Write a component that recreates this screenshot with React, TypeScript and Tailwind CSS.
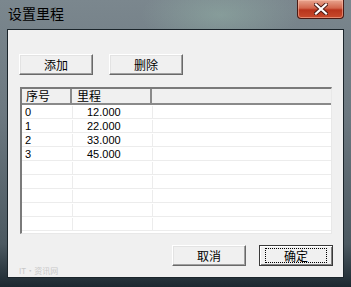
import React from "react";

const rows = [
  { id: "0", km: "12.000" },
  { id: "1", km: "22.000" },
  { id: "2", km: "33.000" },
  { id: "3", km: "45.000" },
];

function WinButton({ label, primary }: { label: string; primary?: boolean }) {
  return (
    <button
      className={`flex h-[21px] w-[74px] items-center justify-center bg-[#f0f0f0] text-[12px] text-black ${
        primary
          ? "border border-[#3a3a3a] shadow-[inset_1px_1px_0_#fff,inset_-1px_-1px_0_#808080]"
          : "border-t border-l border-[#fff] border-r border-b border-r-[#696969] border-b-[#696969] shadow-[inset_-1px_-1px_0_#a0a0a0,inset_1px_1px_0_#e3e3e3]"
      }`}
      style={{ fontFamily: '"Noto Sans CJK SC", sans-serif' }}
    >
      {primary ? (
        <span className="flex h-[15px] w-[62px] items-center justify-center border border-dotted border-black">
          {label}
        </span>
      ) : (
        label
      )}
    </button>
  );
}

export default function App() {
  return (
    <div
      className="relative flex h-[287px] w-[351px] flex-col overflow-hidden bg-[linear-gradient(180deg,#7b878e_0%,#6c7880_40%,#4c5961_85%,#1c2830_100%)]"
      style={{ fontFamily: '"Noto Sans CJK SC", sans-serif' }}
    >
      <div className="pointer-events-none absolute left-[140px] top-[-20px] h-[70px] w-[160px] rounded-full bg-[radial-gradient(ellipse,rgba(160,200,180,0.35),transparent_70%)]" />
      {/* title bar */}
      <div className="relative flex h-[29px] items-start justify-between pl-[8px]">
        <span className="mt-[3px] text-[14px] font-normal leading-[20px] text-[#000000]">
          设置里程
        </span>
        <div className="mr-[7px] flex h-[19px] w-[47px] items-center justify-center rounded-b-[4px] border border-t-0 border-[#4a1a14] bg-[linear-gradient(180deg,#e8a58f_0%,#d2664c_45%,#b8341c_55%,#c84a2c_100%)] shadow-[inset_0_0_0_1px_rgba(255,200,180,0.5)]">
          <svg width="14" height="12" viewBox="0 0 14 12">
            <path
              d="M2 1.5 L12 10.5 M12 1.5 L2 10.5"
              stroke="#4a1a14"
              strokeWidth="4"
              strokeLinecap="square"
            />
            <path
              d="M2 1.5 L12 10.5 M12 1.5 L2 10.5"
              stroke="#fff"
              strokeWidth="2.2"
              strokeLinecap="square"
            />
          </svg>
        </div>
      </div>
      {/* client area */}
      <div className="relative mx-[7px] flex h-[249px] flex-col border border-[#1b252b] bg-[#f0f0f0] pl-[11px] pr-[9px]">
        <div className="mt-[24px] flex gap-[16px]">
          <WinButton label="添加" />
          <WinButton label="删除" />
        </div>
        <div className="ml-[1px] mt-[12px] flex h-[148px] w-[312px] flex-col border-t-2 border-l-2 border-[#7a7a7a] border-r border-b border-r-[#e8e8e8] border-b-[#e8e8e8] bg-white">
          <div className="flex h-[16px] border-b-2 border-[#8a8a8a] bg-[#f0f0f0] text-[12px] leading-[14px] text-black">
            <div className="w-[50px] border-r-2 border-[#8a8a8a] pl-[4px]">序号</div>
            <div className="w-[80px] border-r-2 border-[#8a8a8a] pl-[5px]">里程</div>
            <div className="flex-1" />
          </div>
          {Array.from({ length: 9 }).map((_, i) => {
            const r = rows[i];
            return (
              <div
                key={i}
                className="flex h-[14px] border-b border-[#ececec] pt-[1px] text-[11px] leading-[13px] text-black"
                style={{ fontFamily: '"Liberation Sans", Arial, sans-serif' }}
              >
                <div className="w-[51px] border-r border-[#ececec] pl-[3px]">{r?.id}</div>
                <div className="w-[80px] border-r border-[#ececec] pl-[14px]">{r?.km}</div>
                <div className="flex-1" />
              </div>
            );
          })}
        </div>
        <div className="mt-[11px] flex justify-end gap-[13px] pr-[1px]">
          <WinButton label="取消" />
          <WinButton label="确定" primary />
        </div>
        <div className="mt-auto mb-[1px] text-[8px] leading-[10px] text-[#c8c8c8]">
          IT·资讯网
        </div>
      </div>
    </div>
  );
}
